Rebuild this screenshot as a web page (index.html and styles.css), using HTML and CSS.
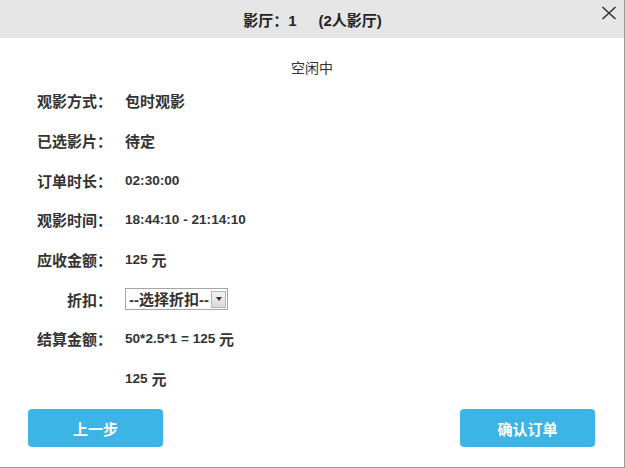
FILE: index.html
```html
<!DOCTYPE html>
<html lang="zh-CN">
<head>
    <meta charset="UTF-8">
    <title>确认订单</title>
    <link rel="stylesheet" href="styles.css">
</head>
<body>

<div class="dialog">
    <div class="dialog-head">
        <span class="title">影厅：1<span class="hall-type">(2人影厅)</span></span>
        <span class="close">
            <svg width="16" height="14" viewBox="0 0 16 14">
                <path d="M1.5 1 L14.5 13 M14.5 1 L1.5 13" stroke="#333" stroke-width="1.6" fill="none"/>
            </svg>
        </span>
    </div>

    <div class="dialog-body">
        <div class="status">空闲中</div>

        <div class="info">
            <div class="label">观影方式：</div>
            <div class="value cjk">包时观影</div>

            <div class="label">已选影片：</div>
            <div class="value cjk">待定</div>

            <div class="label">订单时长：</div>
            <div class="value">02:30:00</div>

            <div class="label">观影时间：</div>
            <div class="value">18:44:10 - 21:14:10</div>

            <div class="label">应收金额：</div>
            <div class="value">125&nbsp;<span class="unit">元</span></div>

            <div class="label">折扣：</div>
            <div class="value">
                <div class="fake-select">
                    <select>
                        <option>--选择折扣--</option>
                    </select>
                    <span class="arrow"></span>
                </div>
            </div>

            <div class="label">结算金额：</div>
            <div class="value">50*2.5*1 = 125&nbsp;<span class="unit">元</span></div>

            <div class="label"></div>
            <div class="value">125&nbsp;<span class="unit">元</span></div>
        </div>
    </div>

    <div class="dialog-foot">
        <button class="btn">上一步</button>
        <button class="btn">确认订单</button>
    </div>
</div>

</body>
</html>
```

FILE: styles.css
```css
body {
    margin: 0;
    padding: 0;
    font-family: "Liberation Sans", "Noto Sans CJK SC", sans-serif;
    color: #333;
    background: #fff;
}

.dialog {
    width: 624px;
    height: 467px;
    border-right: 1px solid #9a9a9a;
    border-bottom: 1px solid #9a9a9a;
    display: flex;
    flex-direction: column;
}

.dialog-head {
    height: 38px;
    background-color: #e5e5e5;
    display: flex;
    align-items: center;
    justify-content: center;
    position: relative;
}

.title {
    font-size: 15px;
    font-weight: bold;
    color: #222;
    margin-left: 1px;
}

.hall-type {
    margin-left: 22px;
}

.close {
    position: absolute;
    right: 7px;
    top: 6px;
    line-height: 0;
}

.dialog-body {
    flex: 1;
}

.status {
    text-align: center;
    font-size: 14px;
    line-height: 20px;
    margin-top: 20px;
    color: #333;
}

.info {
    display: grid;
    grid-template-columns: 112px 1fr;
    grid-auto-rows: 39.7px;
    margin-top: 3px;
    column-gap: 13px;
    font-size: 13.6px;
    font-weight: bold;
}

.label,
.value {
    display: flex;
    align-items: center;
}

.label {
    justify-content: flex-end;
    font-size: 15px;
}

.cjk,
.unit {
    font-size: 15px;
}

.fake-select {
    display: flex;
    align-items: center;
    height: 20px;
    border: 1px solid #a5a5a5;
    background: #fff;
}

.fake-select select {
    appearance: none;
    -webkit-appearance: none;
    border: none;
    outline: none;
    background: transparent;
    font-family: inherit;
    font-size: 15px;
    font-weight: bold;
    color: #333;
    padding: 0 2px 0 3px;
    height: 20px;
}

.arrow {
    width: 15px;
    height: 17px;
    margin-right: 1px;
    border: 1px solid #b5b5b5;
    background: linear-gradient(#f4f4f4, #d8d8d8);
    display: flex;
    align-items: center;
    justify-content: center;
    box-sizing: border-box;
}

.arrow::after {
    content: "";
    border-left: 3px solid transparent;
    border-right: 3px solid transparent;
    border-top: 4px solid #333;
}

.dialog-foot {
    display: flex;
    justify-content: space-between;
    padding: 0 29px 20px 28px;
}

.btn {
    width: 135px;
    height: 38px;
    border: none;
    border-radius: 4px;
    background-color: #3cb4e5;
    color: #fff;
    font-family: inherit;
    font-size: 15px;
    font-weight: bold;
    cursor: pointer;
}
```
